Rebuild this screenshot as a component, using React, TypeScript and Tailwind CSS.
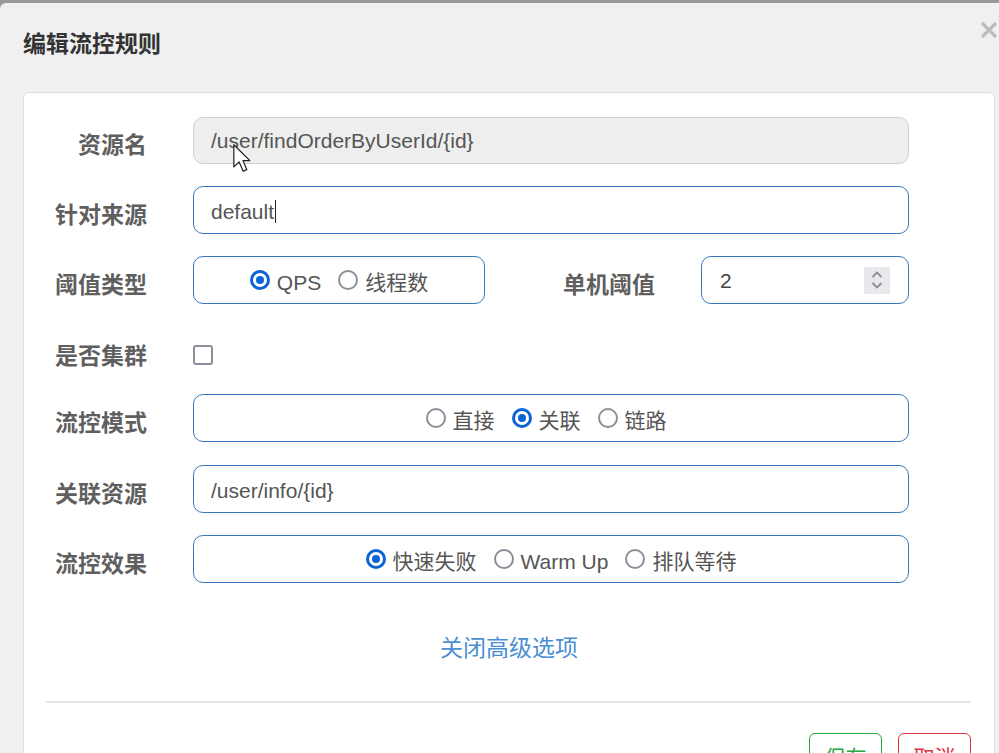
import React from "react";

const cjk = { fontFamily: '"Noto Sans CJK SC", "Liberation Sans", sans-serif' };
const latin = { fontFamily: '"Liberation Sans", "Noto Sans CJK SC", sans-serif' };

const Radio = ({ checked }: { checked?: boolean }) =>
  checked ? (
    <span className="w-[20px] h-[20px] rounded-full border-[3px] border-[#0b63d5] bg-white flex items-center justify-center shrink-0">
      <span className="w-[8px] h-[8px] rounded-full bg-[#0b63d5]" />
    </span>
  ) : (
    <span className="w-[20px] h-[20px] rounded-full border-2 border-[#8f8d99] bg-white shrink-0" />
  );

const Option = ({ label, checked, first }: { label: string; checked?: boolean; first?: boolean }) => (
  <label className={`flex items-center ${first ? "" : "ml-[17px]"}`}>
    <Radio checked={checked} />
    <span className="ml-[7px] pt-[5px] text-[21px] text-[#555]" style={latin}>
      {label}
    </span>
  </label>
);

const Label = ({ children, className = "w-[101px] mt-[7px]" }: { children: React.ReactNode; className?: string }) => (
  <div className={`${className} text-right text-[23px] font-bold text-[#5f5f5f] shrink-0`} style={cjk}>
    {children}
  </div>
);

const Box = ({ children, className = "w-[716px]" }: { children: React.ReactNode; className?: string }) => (
  <div className={`${className} h-[48px] ml-[46px] rounded-[10px] border border-[#3679bd] bg-white flex items-center`}>
    {children}
  </div>
);

const Row = ({ children, className = "" }: { children: React.ReactNode; className?: string }) => (
  <div className={`flex items-center h-[48px] ${className}`}>{children}</div>
);

export default function App() {
  return (
    <div className="relative w-[999px] h-[753px] overflow-hidden bg-[#999] pt-[3px]">
      <div className="bg-[#f0f0f0] rounded-tl-[6px] h-[750px] pl-[23px] pr-[4px]">
        {/* header */}
        <div className="h-[89px] flex justify-between pt-[24px]">
          <h1 className="text-[23px] leading-[30px] font-bold text-[#333]" style={cjk}>
            编辑流控规则
          </h1>
          <svg className="mt-[-7px] mr-[-4px]" width="20" height="20" viewBox="0 0 20 20">
            <path d="M3 3 L17 17 M17 3 L3 17" stroke="#bdbdbd" strokeWidth="3.2" />
          </svg>
        </div>

        {/* body */}
        <div className="bg-white border border-[#dcdcdc] rounded-[6px] px-[22px] pt-[23px] h-[700px]">
          <div className="flex flex-col gap-[22px]">
            <Row>
              <Label>资源名</Label>
              <div className="w-[716px] h-[47px] ml-[46px] rounded-[10px] border border-[#cfcfcf] bg-[#eeeeee] flex items-center px-[17px]">
                <span className="pt-[2px] text-[21px] text-[#555]" style={latin}>
                  /user/findOrderByUserId/{"{id}"}
                </span>
              </div>
            </Row>

            <Row>
              <Label>针对来源</Label>
              <Box>
                <span className="pl-[17px] pt-[3px] text-[21px] text-[#555]" style={latin}>
                  default
                </span>
                <span className="w-px h-[23px] bg-[#222] ml-[1px] mt-[2px]" />
              </Box>
            </Row>

            <Row>
              <Label>阈值类型</Label>
              <Box className="w-[292px] justify-center">
                <Option label="QPS" checked first />
                <Option label="线程数" />
              </Box>
              <Label className="w-[170px] mt-[7px]">单机阈值</Label>
              <Box className="w-[208px] justify-between pl-[18px] pr-[18px]">
                <span className="pt-[2px] text-[21px] text-[#444]" style={latin}>
                  2
                </span>
                <span className="w-[26px] h-[27px] bg-[#e9e8ed] flex items-center justify-center">
                  <svg width="14" height="22" viewBox="0 0 14 22">
                    <path d="M2.5 8 L7 3.5 L11.5 8 M2.5 14 L7 18.5 L11.5 14" fill="none" stroke="#8f8d99" strokeWidth="1.8" />
                  </svg>
                </span>
              </Box>
            </Row>

            <div className="flex items-center h-[46px]">
              <Label className="w-[101px] mt-[10px]">是否集群</Label>
              <span className="ml-[46px] mt-[12px] w-[20px] h-[20px] rounded-[3px] border-2 border-[#8f8d99] bg-white" />
            </div>

            <Row>
              <Label>流控模式</Label>
              <Box className="w-[716px] justify-center pr-[10px]">
                <Option label="直接" first />
                <Option label="关联" checked />
                <Option label="链路" />
              </Box>
            </Row>

            <Row className="mt-[1px]">
              <Label>关联资源</Label>
              <Box>
                <span className="pl-[17px] pt-[3px] text-[21px] text-[#555]" style={latin}>
                  /user/info/{"{id}"}
                </span>
              </Box>
            </Row>

            <Row>
              <Label>流控效果</Label>
              <Box className="w-[716px] justify-center">
                <Option label="快速失败" checked first />
                <Option label="Warm Up" />
                <Option label="排队等待" />
              </Box>
            </Row>
          </div>

          <div className="mt-[48px] text-center text-[23px] leading-[30px] text-[#4a8fd1]" style={cjk}>
            关闭高级选项
          </div>

          <div className="mt-[40px] h-[2px] bg-[#e6e6e6] mr-[1px]" />

          <div className="mt-[30px] flex justify-end gap-[16px] mr-[1px]">
            <button
              className="w-[73px] h-[47px] rounded-[6px] border border-[#28a745] bg-white text-[#28a745] text-[21px]"
              style={cjk}
            >
              保存
            </button>
            <button
              className="w-[73px] h-[47px] rounded-[6px] border border-[#dc3545] bg-white text-[#dc3545] text-[21px]"
              style={cjk}
            >
              取消
            </button>
          </div>
        </div>
      </div>

      {/* mouse pointer */}
      <svg className="absolute left-[233px] top-[144px]" width="20" height="29" viewBox="0 0 13 19">
        <path d="M0.5 0.5 L0.5 15 L4 11.8 L6.6 17.8 L9 16.8 L6.5 10.9 L11 10.9 Z" fill="#fff" stroke="#222" strokeWidth="0.8" strokeLinejoin="round" />
      </svg>
    </div>
  );
}
